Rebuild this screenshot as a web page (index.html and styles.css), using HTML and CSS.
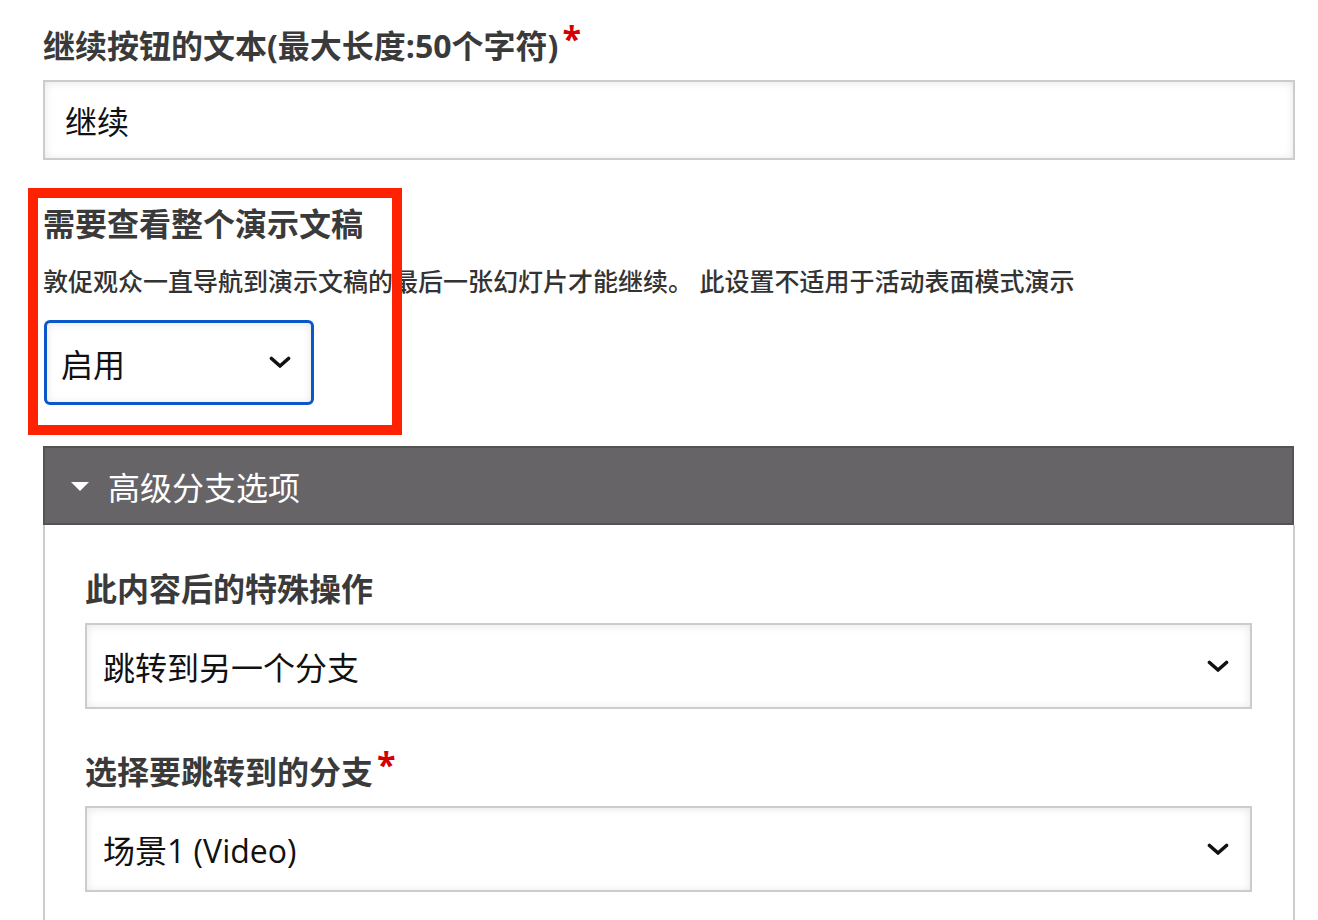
FILE: index.html
```html
<!DOCTYPE html>
<html lang="zh-CN">
<head>
<meta charset="utf-8">
<title>演示设置</title>
<link rel="stylesheet" href="styles.css">
</head>
<body>
<div class="page">
  <div class="field">
    <label class="label">继续按钮的文本(最大长度:50个字符)<span class="req">*</span></label>
    <div class="input">继续</div>
  </div>

  <div class="group">
    <h3 class="group-title">需要查看整个演示文稿</h3>
    <p class="help">敦促观众一直导航到演示文稿的最后一张幻灯片才能继续。 此设置不适用于活动表面模式演示</p>
    <div class="select select-focus">
      <span>启用</span>
      <svg class="chev" width="22" height="13" viewBox="0 0 22 13"><path d="M2.5 2.5 L11 10 L19.5 2.5" fill="none" stroke="#111" stroke-width="3.6" stroke-linecap="round" stroke-linejoin="round"/></svg>
    </div>
    <div class="highlight"></div>
  </div>

  <div class="collapse">
    <div class="collapse-head"><span class="caret"></span>高级分支选项</div>
    <div class="collapse-body">
      <div class="field">
        <label class="label">此内容后的特殊操作</label>
        <div class="select">
          <span>跳转到另一个分支</span>
          <svg class="chev" width="22" height="13" viewBox="0 0 22 13"><path d="M2.5 2.5 L11 10 L19.5 2.5" fill="none" stroke="#111" stroke-width="3.6" stroke-linecap="round" stroke-linejoin="round"/></svg>
        </div>
      </div>
      <div class="field field-next">
        <label class="label">选择要跳转到的分支<span class="req">*</span></label>
        <div class="select">
          <span>场景1 (Video)</span>
          <svg class="chev" width="22" height="13" viewBox="0 0 22 13"><path d="M2.5 2.5 L11 10 L19.5 2.5" fill="none" stroke="#111" stroke-width="3.6" stroke-linecap="round" stroke-linejoin="round"/></svg>
        </div>
      </div>
    </div>
  </div>
</div>
</body>
</html>
```

FILE: styles.css
```css
html, body {
  margin: 0;
  padding: 0;
  background: #fff;
}
body {
  font-family: "Open Sans", "Noto Sans CJK SC", sans-serif;
  color: #333;
}
.page {
  padding: 26px 23px 0 43px;
  height: 894px;
  overflow: hidden;
}
.field {
  display: flex;
  flex-direction: column;
  gap: 14px;
}
.label {
  display: block;
  font-size: 32px;
  font-weight: 700;
  line-height: 40px;
  color: #3a3a3a;
}
.req {
  color: #d40000;
  font-size: 34px;
  vertical-align: 0.22em;
  line-height: 0;
  margin-left: 4px;
}
.input {
  box-sizing: border-box;
  height: 80px;
  border: 2px solid #cccccc;
  box-shadow: inset 0 1px 8px rgba(0, 0, 0, 0.1);
  display: flex;
  align-items: center;
  padding-left: 20px;
  font-size: 32px;
  color: #111;
}
.group {
  position: relative;
  margin-top: 44px;
}
.group-title {
  margin: 0;
  font-size: 32px;
  font-weight: 700;
  line-height: 40px;
  color: #3a3a3a;
}
.help {
  margin: 20px 0 0;
  font-size: 25px;
  font-weight: 500;
  line-height: 34px;
  color: #333;
}
.select {
  box-sizing: border-box;
  height: 86px;
  border: 2px solid #cccccc;
  box-shadow: inset 0 1px 8px rgba(0, 0, 0, 0.1);
  display: flex;
  align-items: center;
  justify-content: space-between;
  padding: 0 21px 0 16px;
  font-size: 32px;
  color: #111;
}
.select-focus {
  margin: 22px 0 0 1px;
  width: 270px;
  height: 85px;
  border: 3px solid #0a57c9;
  border-radius: 6px;
  padding: 0 20px 0 14px;
}
.chev {
  display: block;
  flex: none;
}
.highlight {
  position: absolute;
  left: -15px;
  top: -16px;
  width: 374px;
  height: 247px;
  box-sizing: border-box;
  border: 10px solid #ff2200;
  pointer-events: none;
}
.collapse {
  margin-top: 41px;
}
.collapse-head {
  box-sizing: border-box;
  height: 79px;
  background: #676467;
  border: 2px solid #545255;
  display: flex;
  align-items: center;
  padding-left: 26px;
  color: #fff;
  font-size: 32px;
  gap: 19px;
  margin-right: 1px;
}
.caret {
  width: 0;
  height: 0;
  border-left: 9px solid transparent;
  border-right: 9px solid transparent;
  border-top: 9px solid #fff;
  margin-top: 2px;
}
.collapse-body {
  border-left: 2px solid #cccccc;
  border-right: 2px solid #cccccc;
  padding: 44px 41px 60px 40px;
}
.field-next {
  margin-top: 43px;
}
```
